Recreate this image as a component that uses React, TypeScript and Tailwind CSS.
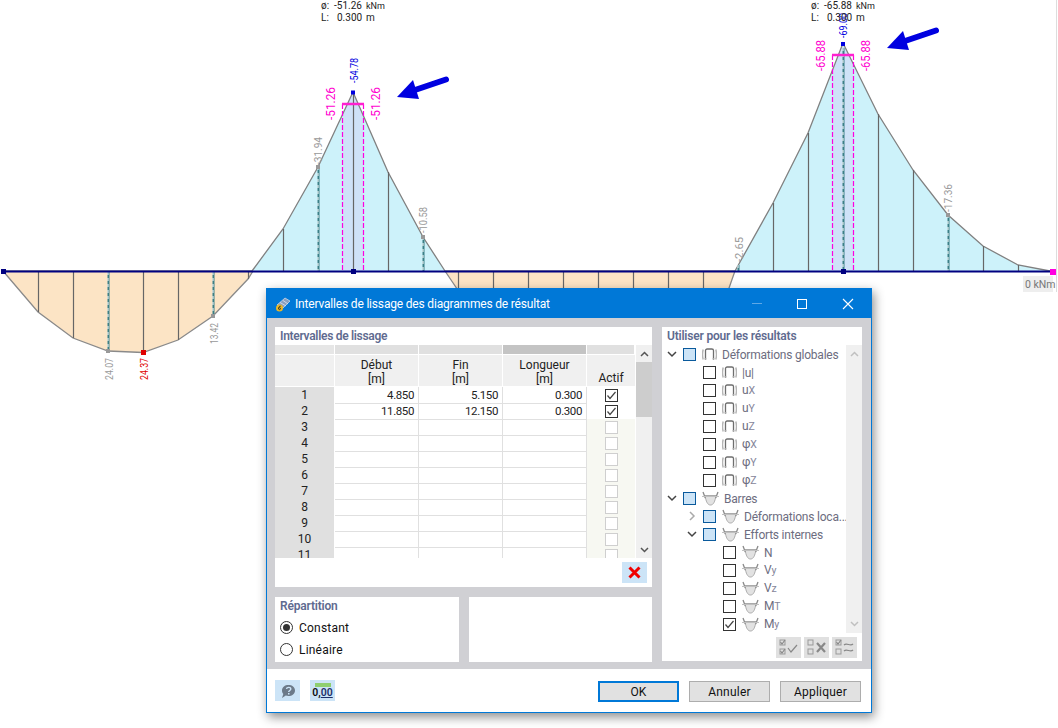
import React from "react";

const Frame = () => (
  <svg width="15" height="14" viewBox="0 0 15 14" fill="none" className="shrink-0">
    <path d="M1.200 2.500C0.200 6 0.200 9 1.200 12.500M13.800 2.500C14.800 6 14.800 9 13.800 12.500" stroke="#b5b5b5" strokeWidth="1.500" />
    <path d="M3.500 12V3.500C3.500 2.500 4.200 2 5.200 2H9.800C10.800 2 11.500 2.500 11.500 3.500V12" stroke="#6e6e6e" strokeWidth="1.300" />
    <path d="M3.500 11V13M11.500 11V13" stroke="#a5a5a5" strokeWidth="1.600" />
  </svg>
);

const Beam = () => (
  <svg width="17" height="15" viewBox="0 0 17 15" fill="none" className="shrink-0">
    <path d="M3 4.500C4 10.500 5.500 14 8.500 14C11.500 14 13 10.500 14 4.500Z" fill="#e2e2e2" stroke="#aaaaaa" />
    <path d="M1 1L3.300 7M16 1L13.700 7" stroke="#8a8a8a" strokeWidth="1.300" />
    <path d="M0 5.500H17" stroke="#c0c0c0" strokeWidth="1" />
  </svg>
);

const Check = ({ checked = false, disabled = false }: { checked?: boolean; disabled?: boolean }) => (
  <span className={`flex h-[13px] w-[13px] shrink-0 items-center justify-center border bg-white ${disabled ? "border-[#cfcfcf]" : "border-[#333333]"}`}>
    {checked && (
      <svg width="11" height="11" viewBox="0 0 11 11" fill="none">
        <path d="M1.500 5.500L4 8.500L9.500 2" stroke="#444" strokeWidth="1.200" />
      </svg>
    )}
  </span>
);

const Square = () => <span className="h-[13px] w-[13px] shrink-0 border border-[#0a5a9c] bg-[#cce4f7]" />;

const Chevron = ({ open }: { open: boolean }) => (
  <svg width="10" height="10" viewBox="0 0 10 10" fill="none" className="shrink-0">
    {open ? (
      <path d="M1 3L5 7L9 3" stroke="#444" strokeWidth="1.500" />
    ) : (
      <path d="M3 1L7 5L3 9" stroke="#aaa" strokeWidth="1.500" />
    )}
  </svg>
);

const Label = ({ main, sub }: { main: string; sub?: string }) => (
  <span className="ml-[5px] whitespace-nowrap pt-px text-[12px] leading-[18px] tracking-[-0.22px] text-[#6d6d80]">
    {main}
    {sub && <span className="text-[10.500px] text-[#85859a]">{sub}</span>}
  </span>
);

type Tree = { indent: number; chev?: "open" | "closed"; box: "square" | "check" | "checked"; icon: "frame" | "beam"; main: string; sub?: string };

const tree: Tree[] = [
  { indent: 5, chev: "open", box: "square", icon: "frame", main: "Déformations globales" },
  { indent: 41, box: "check", icon: "frame", main: "|u|" },
  { indent: 41, box: "check", icon: "frame", main: "u", sub: "X" },
  { indent: 41, box: "check", icon: "frame", main: "u", sub: "Y" },
  { indent: 41, box: "check", icon: "frame", main: "u", sub: "Z" },
  { indent: 41, box: "check", icon: "frame", main: "φ", sub: "X" },
  { indent: 41, box: "check", icon: "frame", main: "φ", sub: "Y" },
  { indent: 41, box: "check", icon: "frame", main: "φ", sub: "Z" },
  { indent: 5, chev: "open", box: "square", icon: "beam", main: "Barres" },
  { indent: 25, chev: "closed", box: "square", icon: "beam", main: "Déformations loca..." },
  { indent: 25, chev: "open", box: "square", icon: "beam", main: "Efforts internes" },
  { indent: 61, box: "check", icon: "beam", main: "N" },
  { indent: 61, box: "check", icon: "beam", main: "V", sub: "y" },
  { indent: 61, box: "check", icon: "beam", main: "V", sub: "z" },
  { indent: 61, box: "check", icon: "beam", main: "M", sub: "T" },
  { indent: 61, box: "checked", icon: "beam", main: "M", sub: "y" },
];

const rows = [
  ["1", "4.850", "5.150", "0.300"],
  ["2", "11.850", "12.150", "0.300"],
  ["3"], ["4"], ["5"], ["6"], ["7"], ["8"], ["9"], ["10"], ["11"],
];

const Table = () => (
  <div className="flex h-[213px] overflow-hidden">
    <div className="w-[360px] text-[12px] text-[#222222]">
      <div className="grid h-[10px] grid-cols-[60px_84px_84px_84px_48px]">
        <div className="mr-px mb-px bg-[#e6e6e6]" />
        <div className="mr-px mb-px bg-[#e0e0e0]" />
        <div className="mr-px mb-px bg-[#e0e0e0]" />
        <div className="mr-px mb-px bg-[#c4c4c4]" />
        <div className="mr-px mb-px bg-[#e0e0e0]" />
      </div>
      <div className="grid h-[32px] grid-cols-[60px_84px_84px_84px_48px] text-center leading-[14px]">
        <div className="mr-px mb-px bg-[#f0f0f0]" />
        <div className="mr-px mb-px bg-[#f0f0f0] pt-[3px]">Début<br />[m]</div>
        <div className="mr-px mb-px bg-[#f0f0f0] pt-[3px]">Fin<br />[m]</div>
        <div className="mr-px mb-px bg-[#f0f0f0] pt-[3px]">Longueur<br />[m]</div>
        <div className="mb-px bg-[#f0f0f0] pt-[16px]">Actif</div>
      </div>
      {rows.map((r) => (
        <div key={r[0]} className="grid h-[16px] grid-cols-[60px_84px_84px_84px_48px] leading-[16px]">
          <div className="mr-px border-b border-white bg-[#e0e0e0] text-center">{r[0]}</div>
          {[1, 2, 3].map((i) => (
            <div key={i} className="border-r border-b border-[#e0e0e0] pr-[4px] text-right text-[11.500px] tracking-[-0.4px]">{r[i] ?? ""}</div>
          ))}
          <div className={`flex items-center justify-center border-b border-[#e0e0e0] ${r[1] ? "bg-white" : "bg-[#f7f8f2]"}`}>
            <Check checked={!!r[1]} disabled={!r[1]} />
          </div>
        </div>
      ))}
    </div>
    <div className="ml-px flex flex-1 flex-col bg-[#f0f0f0]">
      <div className="flex h-[17px] shrink-0 items-center justify-center">
        <svg width="9" height="6" viewBox="0 0 9 6" fill="none"><path d="M1 5L4.500 1.500L8 5" stroke="#555" strokeWidth="1.500" /></svg>
      </div>
      <div className="h-[55px] shrink-0 bg-[#cdcdcd]" />
      <div className="flex flex-1 items-end justify-center pb-[5px]">
        <svg width="9" height="6" viewBox="0 0 9 6" fill="none"><path d="M1 1L4.500 4.500L8 1" stroke="#555" strokeWidth="1.500" /></svg>
      </div>
    </div>
  </div>
);

const Diagram = () => {
  const label = (x: number, y: number, t: string, c: string, len: number, s = 10.500) => (
    <text key={t + x} x={x} y={y} fill={c} fontSize={s} textLength={len} lengthAdjust="spacingAndGlyphs" transform={`rotate(-90 ${x} ${y})`} fontFamily="Roboto">{t}</text>
  );
  const solidNeg: [number, number][] = [[38, 312], [73, 338], [143, 352], [178, 340], [248, 279]];
  const solidPos: [number, number][] = [[283, 229], [353, 93], [388, 172], [773, 203], [808, 133], [878, 114], [913, 170], [983, 246], [1018, 265]];
  const orange = [458, 493, 528, 563, 598, 633, 668, 703];
  const dashed: [number, number, number][] = [[108, 272, 351], [213, 272, 316], [318, 167, 271], [423, 237, 271], [738, 265, 271], [948, 215, 271], [843, 48, 271]];
  return (
    <svg className="absolute inset-0" width="1058" height="728" viewBox="0 0 1058 728">
      <path d="M3 271L38 312L73 338L108 351L143 352.500L178 340L213 316L248 279L253 271Z" fill="#fce4c5" stroke="#8a8a8a" strokeWidth="1.300" />
      <path d="M445 271L470 308H722L735 271Z" fill="#fce4c5" stroke="#8a8a8a" strokeWidth="1.300" />
      <path d="M252 271L283 229L318 167L353 92L388 172L423 237L445 271Z" fill="#cdf2fa" />
      <path d="M735 271L773 203L808 133L843 43L878 114L913 170L948 215L983 246L1018 265L1050 271Z" fill="#cdf2fa" />
      <path d="M342.500 271V115.500L353 92L363.500 116V271Z" fill="#cfe2f8" />
      <path d="M832.500 271V71L843 43L853.500 65V271Z" fill="#cfe2f8" />
      <path d="M252 271L283 229L318 167L353 92L388 172L423 237L445 271" fill="none" stroke="#808080" strokeWidth="1.300" />
      <path d="M735 271L773 203L808 133L843 43L878 114L913 170L948 215L983 246L1018 265L1050 271" fill="none" stroke="#808080" strokeWidth="1.300" />
      {solidNeg.map(([x, y]) => <line key={x} x1={x + 0.5} x2={x + 0.5} y1="272" y2={y} stroke="#666" strokeWidth="1.200" />)}
      {solidPos.map(([x, y]) => <line key={x} x1={x + 0.5} x2={x + 0.5} y1={y} y2="271" stroke="#666" strokeWidth="1.200" />)}
      {orange.map((x) => <line key={x} x1={x + 0.5} x2={x + 0.5} y1="272" y2="300" stroke="#666" strokeWidth="1.200" />)}
      {dashed.map(([x, a, b]) => (
        <g key={x}>
          <line x1={x + 0.5} x2={x + 0.5} y1={a} y2={b} stroke="#3b7f86" strokeWidth="2" />
          <line x1={x} x2={x} y1={a} y2={b} stroke="#fff" strokeWidth="1" strokeDasharray="3 3" />
        </g>
      ))}
      {[342, 363, 832, 853].map((x) => (
        <line key={x} x1={x + 0.5} x2={x + 0.5} y1={x < 400 ? 104 : 55} y2="271" stroke="#ff00e0" strokeWidth="1.200" strokeDasharray="5 2" />
      ))}
      <path d="M342 104H364M832 55H854" stroke="#ff20d0" strokeWidth="2.500" />
      <path d="M3 271.500H1053" stroke="#000080" strokeWidth="2" />
      <rect x="1" y="269" width="5" height="5" fill="#000080" />
      <rect x="351" y="269" width="5" height="5" fill="#000080" />
      <rect x="841" y="269" width="5" height="5" fill="#000080" />
      <rect x="351" y="90.500" width="4" height="4" fill="#0000e0" />
      <rect x="841" y="42" width="4" height="4" fill="#0000e0" />
      <rect x="106" y="349" width="4" height="4" fill="#999" />
      <rect x="141" y="350" width="5" height="5" fill="#e00000" />
      <rect x="211" y="314" width="4" height="4" fill="#999" />
      <rect x="946" y="213" width="4" height="4" fill="#999" />
      <rect x="316" y="165" width="4" height="4" fill="#999" />
      <rect x="421" y="235" width="4" height="4" fill="#999" />
      <rect x="1050" y="269" width="7" height="6" fill="#ff00e0" />
      <line x1="1056.500" x2="1056.500" y1="0" y2="292" stroke="#ddd" />
      <rect x="1023" y="276" width="30" height="16" fill="#eeeeee" />
      <text x="1025" y="288" fill="#777" fontSize="10.500" fontFamily="Roboto">0 kNm</text>
      {label(358, 83, "-54.78", "#0000e0", 25)}
      {label(847, 38, "-69.00", "#0000e0", 25)}
      {label(335, 120, "-51.26", "#ff00d0", 33, 12)}
      {label(380, 120, "-51.26", "#ff00d0", 33, 12)}
      {label(825, 71, "-65.88", "#ff00d0", 31, 12)}
      {label(870, 71, "-65.88", "#ff00d0", 31, 12)}
      {label(322, 165, "-31.94", "#999", 28)}
      {label(427, 233, "-10.58", "#999", 26)}
      {label(743, 262, "-2.65", "#999", 25)}
      {label(952, 212, "-17.36", "#999", 28)}
      {label(113, 380, "24.07", "#999", 22)}
      {label(148, 380, "24.37", "#e00000", 22)}
      {label(218, 344, "13.42", "#999", 21)}
      <text fontSize="10" fill="#222" fontFamily="Roboto">
        <tspan x="321" y="9">ø:</tspan><tspan x="334" y="9">-51.26</tspan><tspan x="366" y="9" fontSize="9">kNm</tspan>
        <tspan x="321" y="21">L:</tspan><tspan x="337" y="21">0.300</tspan><tspan x="366" y="21">m</tspan>
        <tspan x="811" y="9">ø:</tspan><tspan x="824" y="9">-65.88</tspan><tspan x="856" y="9" fontSize="9">kNm</tspan>
        <tspan x="811" y="21">L:</tspan><tspan x="827" y="21">0.300</tspan><tspan x="856" y="21">m</tspan>
      </text>
      {[0, 490].map((dx, i) => (
        <g key={dx} transform={`translate(${dx} ${i ? -49 : 0})`}>
          <path d="M446 79.500L412 91" stroke="#0000e0" strokeWidth="6" strokeLinecap="round" />
          <path d="M397 97L413 80L419 99Z" fill="#0000e0" />
        </g>
      ))}
    </svg>
  );
};

const ToolBtn = ({ children }: { children: React.ReactNode }) => (
  <div className="flex h-[21px] w-[25px] items-center justify-center bg-[#e0e0e0]">{children}</div>
);

const FooterBtn = ({ children, primary }: { children: string; primary?: boolean }) => (
  <div className={`flex h-[21px] w-[81px] items-center justify-center bg-[#e1e1e1] pt-px text-[12px] tracking-[0.2px] text-[#111111] ${primary ? "border-2 border-[#0078d7]" : "border border-[#adadad]"}`}>{children}</div>
);

export default function App() {
  return (
    <div className="relative h-[728px] w-[1058px] overflow-hidden bg-white font-['Roboto',sans-serif]">
      <Diagram />
      <div className="absolute top-[288px] left-[266px] flex h-[425px] w-[606px] flex-col border border-[#0078d7] bg-white shadow-[2px_4px_10px_rgba(0,0,0,0.45)]">
        <div className="flex h-[29px] shrink-0 items-center bg-[#0078d7] pl-[8px] text-white">
          <svg width="16" height="16" viewBox="0 0 16 16" className="shrink-0">
            <path d="M2 9L10 2L15 5L8 12Z" fill="#8aa0c0" stroke="#d5dfee" strokeWidth="0.700" />
            <path d="M5 6.500L11 10M8 4.500L13 8" stroke="#e8eef8" strokeWidth="0.700" />
            <circle cx="4.500" cy="12" r="3.500" fill="#e8b82a" />
            <path d="M5.800 10.200C4 10 3.500 11.500 3.500 12.500C3.500 14 5.500 14 5.500 12.500C5.500 11.500 4 11.500 3.500 12.500" stroke="#222" strokeWidth="0.800" fill="none" />
          </svg>
          <span className="ml-[4px] text-[12px] tracking-[-0.18px]">Intervalles de lissage des diagrammes de résultat</span>
          <div className="ml-auto flex items-center">
            <div className="h-px w-[10px] bg-[#5fa8e6]" />
            <div className="ml-[35px] h-[10px] w-[10px] border border-white" />
            <svg width="12" height="12" viewBox="0 0 12 12" className="mr-[17px] ml-[35px]"><path d="M1 1L11 11M11 1L1 11" stroke="#fff" strokeWidth="1.100" /></svg>
          </div>
        </div>
        <div className="flex h-[351px] shrink-0 gap-[10px] bg-[#d0d0d4] px-[8px] pt-[9px]">
          <div className="flex w-[377px] flex-col gap-[10px]">
            <div className="h-[260px] bg-white">
              <div className="h-[18px] pl-[5px] text-[12px] leading-[18px] font-semibold tracking-[-0.3px] text-[#5f6b90]">Intervalles de lissage</div>
              <Table />
              <div className="flex justify-end pt-[4px] pr-[5px]">
                <div className="flex h-[21px] w-[25px] items-center justify-center bg-[#cce4f7]">
                  <svg width="13" height="13" viewBox="0 0 13 13"><path d="M1.500 1.500L11.500 11.500M11.500 1.500L1.500 11.500" stroke="#f00000" strokeWidth="3" /></svg>
                </div>
              </div>
            </div>
            <div className="flex h-[65px] gap-[10px]">
              <div className="w-[184px] bg-white pl-[5px]">
                <div className="h-[18px] text-[12px] leading-[18px] font-semibold tracking-[-0.2px] text-[#5f6b90]">Répartition</div>
                <div className="mt-[5px] flex h-[15px] items-center text-[12px] tracking-[0.2px] text-[#111111]">
                  <span className="flex h-[13px] w-[13px] items-center justify-center rounded-full border border-[#333333]"><span className="h-[7px] w-[7px] rounded-full bg-[#333333]" /></span>
                  <span className="ml-[6px] pt-px">Constant</span>
                </div>
                <div className="mt-[7px] flex h-[15px] items-center text-[12px] tracking-[0.2px] text-[#111111]">
                  <span className="h-[13px] w-[13px] rounded-full border border-[#333333]" />
                  <span className="ml-[6px] pt-px">Linéaire</span>
                </div>
              </div>
              <div className="flex-1 bg-white" />
            </div>
          </div>
          <div className="h-[334px] w-[200px] bg-white">
            <div className="h-[18px] pl-[5px] text-[12px] leading-[18px] font-semibold tracking-[-0.2px] text-[#5f6b90]">Utiliser pour les résultats</div>
            <div className="flex h-[288px]">
              <div className="w-[184px] overflow-hidden">
                {tree.map((t) => (
                  <div key={t.main + (t.sub ?? "") + t.indent} className="flex h-[18px] items-center" style={{ paddingLeft: t.indent }}>
                    {t.chev && <Chevron open={t.chev === "open"} />}
                    <span className={t.chev ? "ml-[6px] flex" : "flex"}>
                      {t.box === "square" ? <Square /> : <Check checked={t.box === "checked"} />}
                    </span>
                    <span className="ml-[6px] flex">{t.icon === "frame" ? <Frame /> : <Beam />}</span>
                    <Label main={t.main} sub={t.sub} />
                  </div>
                ))}
              </div>
              <div className="flex flex-1 flex-col items-center justify-between bg-[#f0f0f0] py-[6px]">
                <svg width="9" height="6" viewBox="0 0 9 6" fill="none"><path d="M1 5L4.500 1.500L8 5" stroke="#c0c0c0" strokeWidth="1.500" /></svg>
                <svg width="9" height="6" viewBox="0 0 9 6" fill="none"><path d="M1 1L4.500 4.500L8 1" stroke="#c0c0c0" strokeWidth="1.500" /></svg>
              </div>
            </div>
            <div className="flex justify-end gap-[3px] pt-[4px] pr-[5px]">
              <ToolBtn>
                <svg width="20" height="17" viewBox="0 0 20 17" fill="none">
                  <rect x="1" y="1" width="5" height="5" stroke="#999" /><rect x="1" y="10" width="5" height="5" stroke="#999" />
                  <path d="M1.500 3L3 5L6 1M1.500 12L3 14L6 10M9 9L12 13L18 6" stroke="#888" strokeWidth="1.200" />
                </svg>
              </ToolBtn>
              <ToolBtn>
                <svg width="20" height="17" viewBox="0 0 20 17" fill="none">
                  <rect x="1" y="1" width="5" height="5" stroke="#999" /><rect x="1" y="10" width="5" height="5" stroke="#999" />
                  <path d="M10 4L18 13M18 4L10 13" stroke="#888" strokeWidth="2.200" />
                </svg>
              </ToolBtn>
              <ToolBtn>
                <svg width="20" height="17" viewBox="0 0 20 17" fill="none">
                  <rect x="1" y="1" width="5" height="5" stroke="#999" /><rect x="1" y="10" width="5" height="5" stroke="#999" />
                  <path d="M1.500 3L3 5L6 1M9 6C12 3 15 8 18 5M18 11C15 14 12 9 9 12" stroke="#888" strokeWidth="1.200" />
                </svg>
              </ToolBtn>
            </div>
          </div>
        </div>
        <div className="flex flex-1 items-center px-[8px]">
          <div className="flex h-[21px] w-[25px] items-center justify-center bg-[#cce4f7]">
            <svg width="16" height="16" viewBox="0 0 16 16">
              <path d="M8.500 2C12 2 15 4 15 7.500C15 11 12 13 8.500 13C7.500 13 6.500 12.800 5.800 12.500L2 15L3.300 11C2.500 10 2 9 2 7.500C2 4 5 2 8.500 2Z" fill="#6c7a89" />
              <path d="M6.500 6C6.800 3.800 10.800 3.800 10.800 6C10.800 7.500 8.700 7.500 8.700 9" stroke="#cce4f7" strokeWidth="1.400" fill="none" />
              <rect x="8" y="10" width="1.500" height="1.500" fill="#cce4f7" />
            </svg>
          </div>
          <div className="ml-[10px] flex h-[21px] w-[25px] flex-col items-center justify-center bg-[#cce4f7]">
            <div className="h-[4px] w-[16px] bg-[#8fcf70]" />
            <div className="text-[10.500px] leading-[12px] font-semibold text-[#111111]">0,<span className="text-[#1c2f6b] underline">00</span></div>
          </div>
          <div className="mt-px ml-auto flex gap-[10px] pr-[2px]">
            <FooterBtn primary>OK</FooterBtn>
            <FooterBtn>Annuler</FooterBtn>
            <FooterBtn>Appliquer</FooterBtn>
          </div>
        </div>
      </div>
    </div>
  );
}
